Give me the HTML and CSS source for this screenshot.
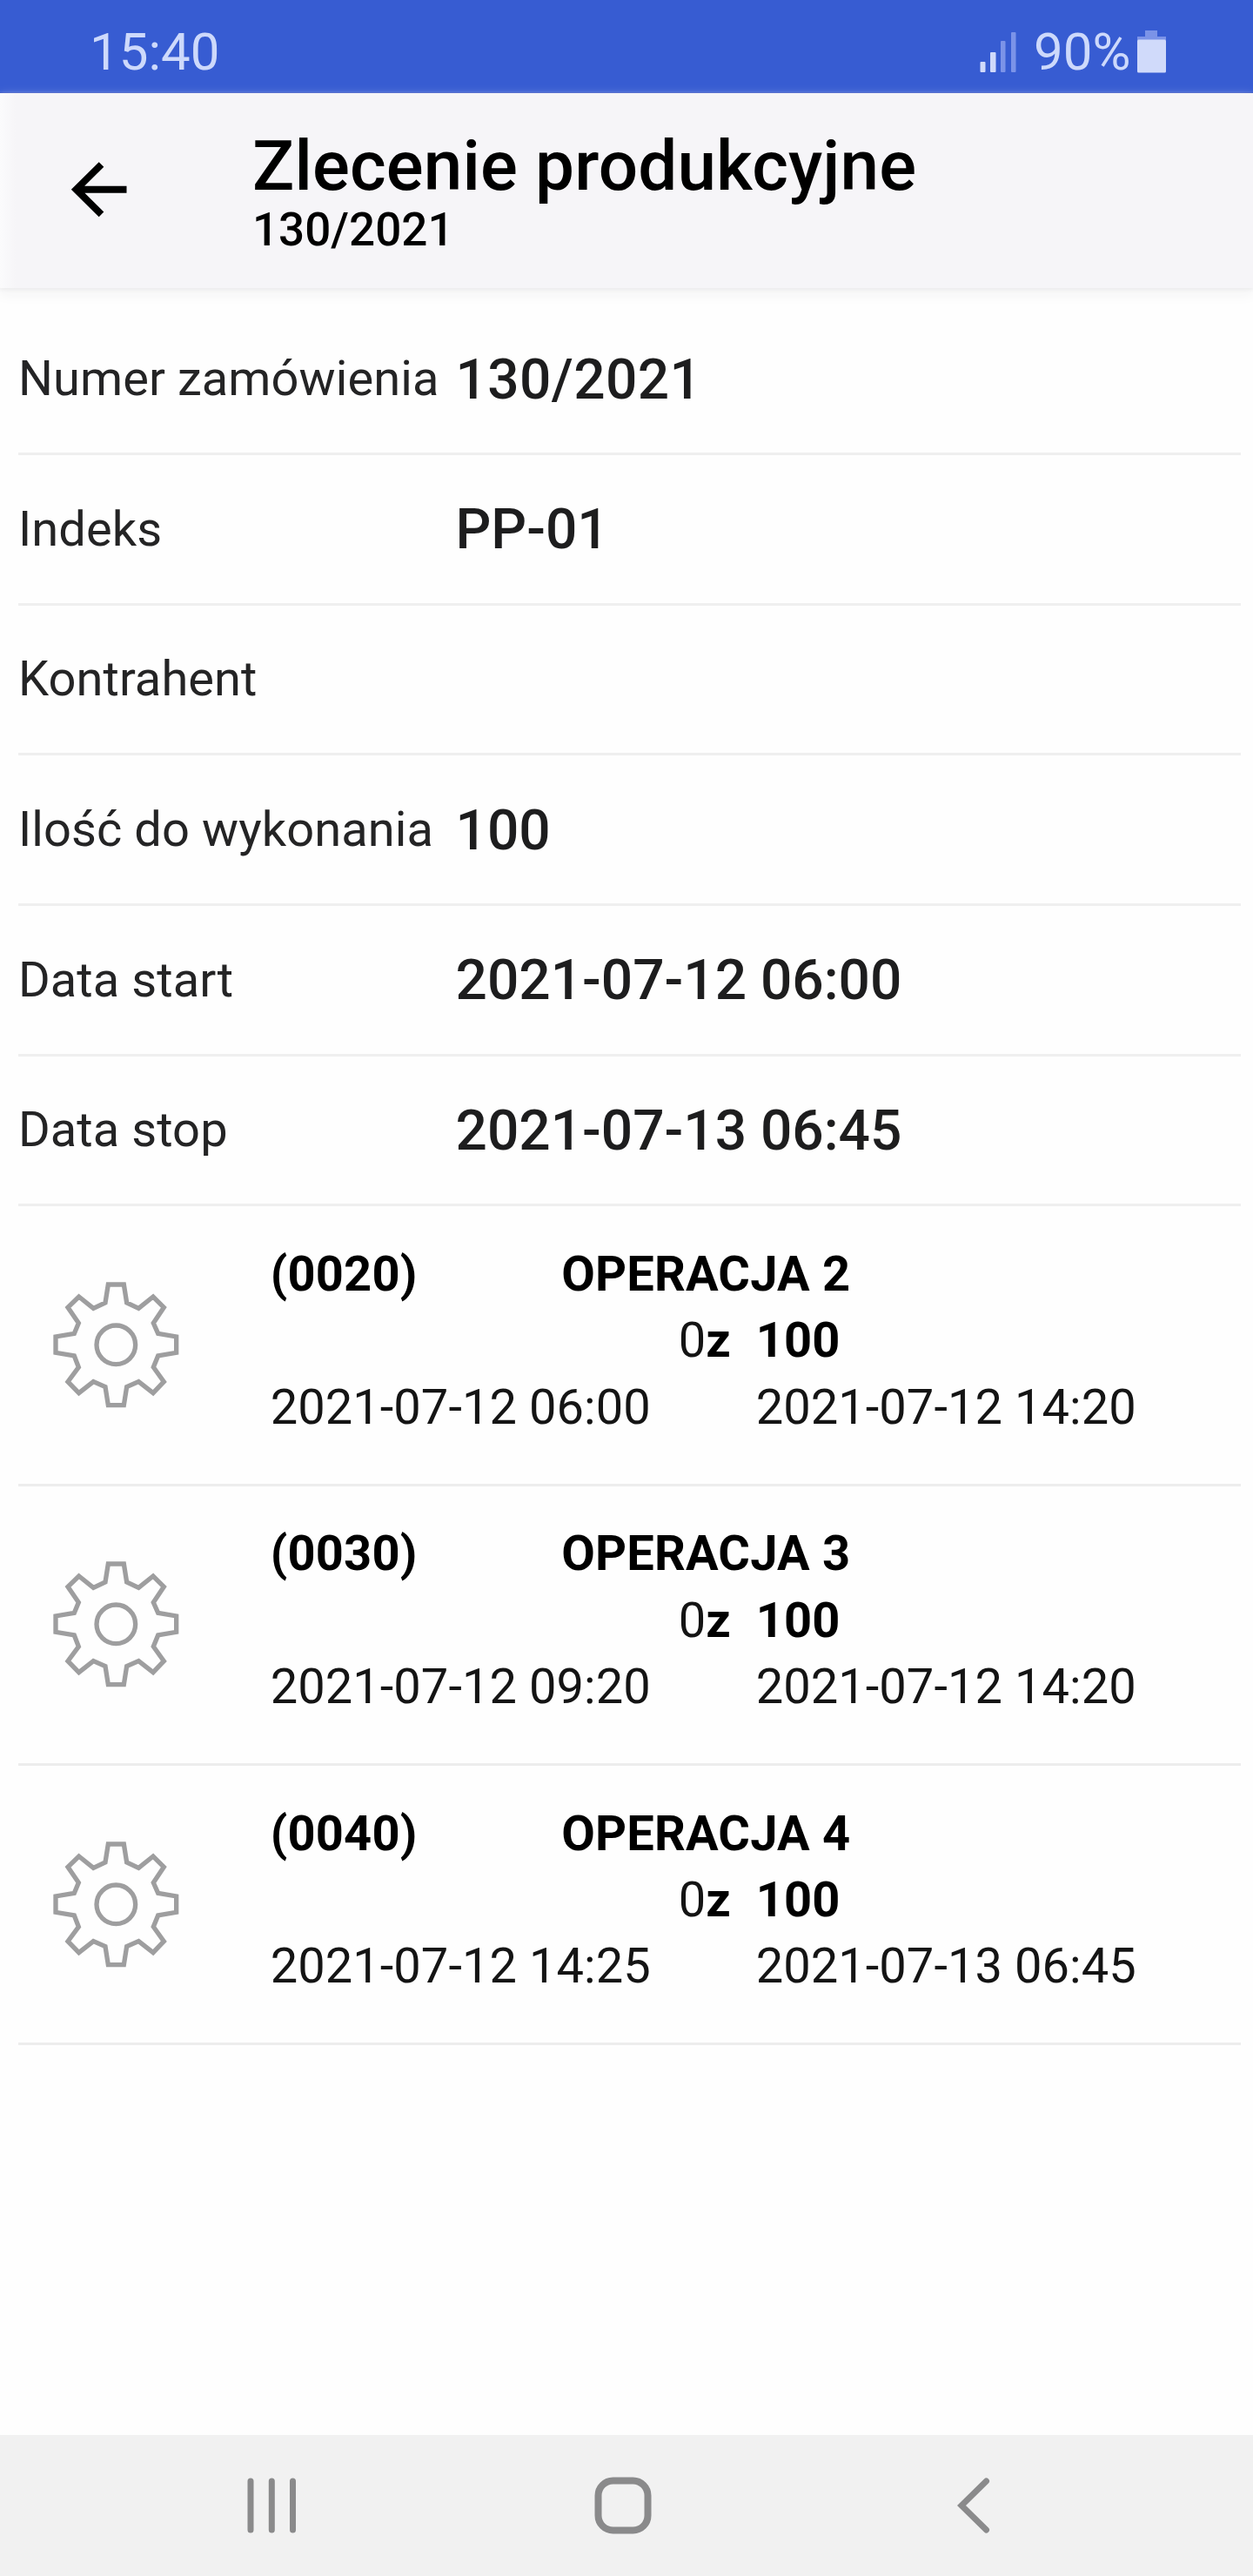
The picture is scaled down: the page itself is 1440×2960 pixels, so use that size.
FILE: index.html
```
<!DOCTYPE html>
<html lang="pl">
<head>
<meta charset="utf-8">
<title>Zlecenie produkcyjne</title>
<link rel="stylesheet" href="styles.css">
</head>
<body>
<svg class="defs" aria-hidden="true">
  <symbol id="gear" viewBox="60 65 440 440">
    <path d="M253 77H307L317 140L358 159L408 119L445 156L409 210L425 246L488 257V312L425 323L409 362L445 412L408 451L358 412L317 430L307 493H253L243 430L202 412L152 451L114 412L151 362L136 323L72 312V257L136 246L151 210L114 156L152 119L202 159L243 140Z"/>
    <circle cx="280" cy="285" r="67"/>
  </symbol>
</svg>
<div class="screen">
  <div class="status-bar">
    <span class="clock">15:40</span>
    <svg class="signal" viewBox="0 0 42 48">
      <rect x="0.5" y="35" width="6" height="12" rx="1"/>
      <rect x="12" y="24" width="6.5" height="23" rx="1"/>
      <rect class="dim" x="24" y="11" width="5.5" height="36" rx="1"/>
      <rect class="dim" x="36" y="1" width="5.5" height="46" rx="1"/>
    </svg>
    <span class="percent">90%</span>
    <svg class="battery" viewBox="0 0 33 50">
      <path class="dim" d="M9 1H23V8H33V12H0V8H9Z"/>
      <rect y="11.500" width="33" height="38" rx="1.500"/>
    </svg>
  </div>

  <header class="app-bar">
    <svg class="back" viewBox="0 0 68 68"><path d="M36.500 5L7.500 33.700L36.500 62.400M7.500 33.700H65.500"/></svg>
    <div class="heading">
      <h1 class="title">Zlecenie produkcyjne</h1>
      <div class="subtitle">130/2021</div>
    </div>
  </header>

  <main class="content">
    <div class="field"><span class="label">Numer zamówienia</span><span class="value number">130/2021</span></div>
    <div class="field"><span class="label">Indeks</span><span class="value">PP-01</span></div>
    <div class="field"><span class="label">Kontrahent</span><span class="value"></span></div>
    <div class="field"><span class="label">Ilość do wykonania</span><span class="value">100</span></div>
    <div class="field"><span class="label">Data start</span><span class="value">2021-07-12 06:00</span></div>
    <div class="field"><span class="label">Data stop</span><span class="value">2021-07-13 06:45</span></div>

    <div class="operation">
      <svg class="gear"><use href="#gear"/></svg>
      <div class="details">
        <div class="name-line"><b>(0020)</b><b>OPERACJA 2</b></div>
        <div class="split"><span class="done">0<b>z</b></span><b>100</b></div>
        <div class="split"><span>2021-07-12 06:00</span><span>2021-07-12 14:20</span></div>
      </div>
    </div>
    <div class="operation">
      <svg class="gear"><use href="#gear"/></svg>
      <div class="details">
        <div class="name-line"><b>(0030)</b><b>OPERACJA 3</b></div>
        <div class="split"><span class="done">0<b>z</b></span><b>100</b></div>
        <div class="split"><span>2021-07-12 09:20</span><span>2021-07-12 14:20</span></div>
      </div>
    </div>
    <div class="operation">
      <svg class="gear"><use href="#gear"/></svg>
      <div class="details">
        <div class="name-line"><b>(0040)</b><b>OPERACJA 4</b></div>
        <div class="split"><span class="done">0<b>z</b></span><b>100</b></div>
        <div class="split"><span>2021-07-12 14:25</span><span>2021-07-13 06:45</span></div>
      </div>
    </div>
  </main>

  <nav class="nav-bar">
    <svg class="recents" viewBox="0 0 60 64"><path d="M5 4V60M29.300 4V60M53.500 4V60"/></svg>
    <svg class="home" viewBox="0 0 68 68"><rect x="5.500" y="5.500" width="57" height="57" rx="17"/></svg>
    <svg class="return" viewBox="0 0 38 64"><path d="M33.500 4L5 32L33.500 60"/></svg>
  </nav>
</div>
</body>
</html>
```
FILE: styles.css
```
* { box-sizing: border-box; }
body {
  margin: 0;
  background: #fefefe;
  color: #000;
  font-family: Roboto, "Liberation Sans", sans-serif;
}
.defs { display: none; }
svg { flex: none; }
.screen {
  display: flex;
  flex-direction: column;
  width: 1440px;
  height: 2960px;
}

/* Status bar */
.status-bar {
  display: flex;
  align-items: center;
  height: 107px;
  padding: 14px 100px 0 103px;
  background: #375cd2;
  border-bottom: 1px solid #2d4cc4;
  color: #cdd9fb;
  font-size: 60px;
  line-height: 92px;
}
.status-bar svg { fill: #d0dafa; }
.status-bar .dim { fill: #7b93e8; }
.clock { flex: 1; }
.signal { width: 42px; height: 48px; margin-right: 20px; }
.percent { width: 119px; }
.battery { width: 33px; height: 50px; margin-top: -3px; }

/* App bar */
.app-bar {
  display: flex;
  height: 224px;
  padding: 40px 0 0 80px;
  background: linear-gradient(90deg, #fbfbfc, #f6f5f8 18px);
  box-shadow: 0 2px 4px #ececed, 0 8px 14px #f4f4f5;
}
.back {
  width: 68px;
  height: 68px;
  margin-top: 37px;
  fill: none;
  stroke: #000;
  stroke-width: 8;
}
.heading { margin-left: 142px; font-weight: 500; }
.title {
  margin: 0;
  font-size: 80px;
  font-weight: 500;
  line-height: 88px;
  letter-spacing: .15px;
}
.subtitle { font-size: 53px; line-height: 59px; }

/* Order fields and operations */
.content { flex: 1; padding: 19.400px 14px 0 21px; }
.field {
  display: flex;
  align-items: center;
  height: 172.650px;
  border-bottom: 3px solid #efefef;
  color: #242425;
}
.label { width: 502.500px; font-size: 56px; letter-spacing: .08px; }
.value { padding-top: 2px; font-size: 64px; font-weight: 500; color: #1d1d1e; }
.number { letter-spacing: .4px; }

.operation {
  display: flex;
  align-items: center;
  height: 321.400px;
  padding-left: 39px;
  border-bottom: 3px solid #ededed;
}
.gear {
  width: 146.670px;
  height: 146.670px;
  fill: none;
  stroke: #9e9e9f;
  stroke-width: 16;
}
.details {
  margin: 0 0 10px 104px;
  font-size: 56px;
  line-height: 76.400px;
  letter-spacing: .06px;
  color: #141414;
}
.details b { font-weight: 700; color: #000; letter-spacing: .2px; }
.name-line { display: grid; grid-template-columns: 334.500px auto; }
.split { display: grid; grid-template-columns: 558px auto; }
.done { padding-left: 469px; }

/* Navigation bar */
.nav-bar {
  display: flex;
  align-items: center;
  height: 162px;
  padding-left: 283px;
  background: #f1f1f1;
  fill: none;
  stroke: #8a8a8b;
  stroke-linecap: round;
}
.recents { width: 60px; height: 64px; stroke-width: 7; }
.home { width: 68px; height: 68px; margin-left: 338.500px; stroke-width: 8; }
.return { width: 38px; height: 64px; margin-left: 350px; stroke-width: 7; }
```
